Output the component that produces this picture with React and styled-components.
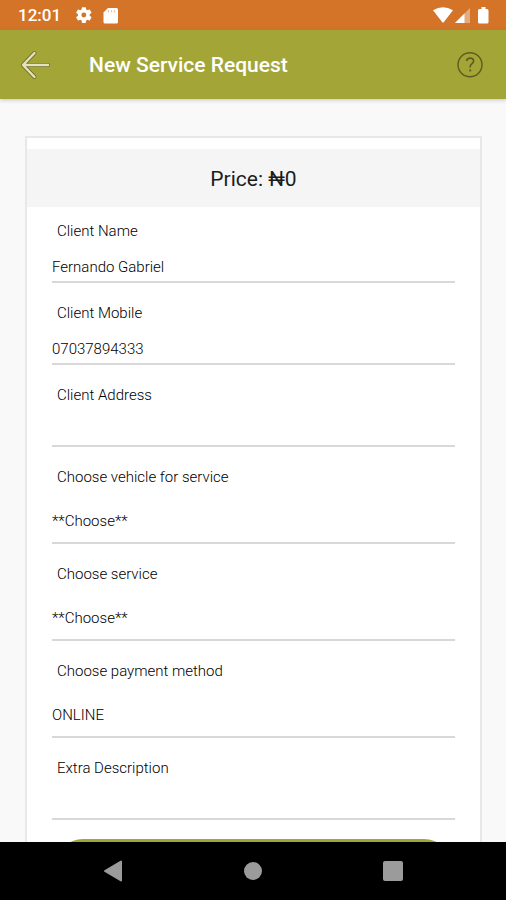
import { useState } from "react";
import styled, { createGlobalStyle } from "styled-components";

const textFields = [
  { id: "clientName", label: "Client Name" },
  { id: "clientMobile", label: "Client Mobile", type: "tel" },
  { id: "clientAddress", label: "Client Address" },
];

const selectFields = [
  { id: "vehicle", label: "Choose vehicle for service", options: ["**Choose**"] },
  { id: "service", label: "Choose service", options: ["**Choose**"] },
  { id: "payment", label: "Choose payment method", options: ["ONLINE", "CASH"] },
];

const StatusIcons = () => (
  <svg width="43" height="18" viewBox="0 0 43 18" fill="#fff" aria-hidden="true">
    <path
      transform="translate(-1 -.8) scale(.82)"
      d="M19.14 12.94c.04-.3.06-.61.06-.94s-.02-.64-.07-.94l2.03-1.58a.49.49 0 0 0 .12-.61l-1.92-3.32a.49.49 0 0 0-.59-.22l-2.39.96a7 7 0 0 0-1.62-.94l-.36-2.54A.48.48 0 0 0 13.92 2.4h-3.84a.48.48 0 0 0-.47.41l-.36 2.54a7.3 7.3 0 0 0-1.62.94l-2.39-.96a.48.48 0 0 0-.59.22L2.74 8.87a.48.48 0 0 0 .12.61l2.03 1.58a7 7 0 0 0 0 1.88l-2.03 1.58a.49.49 0 0 0-.12.61l1.92 3.32c.12.22.37.29.59.22l2.39-.96c.5.38 1.03.7 1.62.94l.36 2.54c.05.24.24.41.48.41h3.84c.24 0 .44-.17.47-.41l.36-2.54a7 7 0 0 0 1.62-.94l2.39.96c.22.08.47 0 .59-.22l1.92-3.32a.48.48 0 0 0-.12-.61zM12 15a3 3 0 1 1 0-6 3 3 0 0 1 0 6z"
    />
    <path d="M33 2h8.500q1.500 0 1.500 1.500v12.500q0 1.500-1.500 1.500h-11.500q-1.500 0-1.500-1.500V6.500z" />
    <path d="M33.500 4v2.500M36.500 4v2.500M39.500 4v2.500" stroke="#d37428" strokeWidth="1.200" opacity=".4" />
  </svg>
);

const SignalIcons = () => (
  <svg width="57" height="18" viewBox="0 0 57 18" fill="#fff" aria-hidden="true">
    <path d="M0 4.200Q10-1.500 20 4.200L10.500 16.500h-1z" />
    <path d="M37 2v15H22z" opacity=".4" />
    <path d="M31.500 7.500V17H22z" />
    <path d="M48.500 1h4v2h1.500q1.500 0 1.500 1.500v11.500q0 1.500-1.500 1.500h-7.500q-1.500 0-1.500-1.500V4.500q0-1.500 1.500-1.500h2z" />
  </svg>
);

const BackArrow = () => (
  <svg width="32" height="30" viewBox="0 0 32 30" fill="none" strokeLinecap="round" strokeLinejoin="round" aria-hidden="true">
    <path d="M14.500 3 3 15l11.500 12M3.500 15H28" stroke="#65652a" strokeWidth="4" opacity=".8" />
    <path d="M14.500 3 3 15l11.500 12M3.500 15H28" stroke="#e6e2bd" strokeWidth="2.400" />
  </svg>
);

const HelpIcon = () => (
  <svg width="26" height="26" viewBox="0 0 26 26" fill="none" stroke="#5f5a1e" aria-hidden="true">
    <circle cx="13" cy="12.800" r="12" strokeWidth="1.400" />
    <path d="M9.500 9c.3-2 1.800-2.900 3.600-2.900 2 0 3.500 1.200 3.500 3 0 2.700-3.400 3-3.400 5.400v1" strokeWidth="1.600" />
    <path d="M13.200 17.500v1.900" strokeWidth="1.900" />
  </svg>
);

export default function App() {
  const [values, setValues] = useState({
    clientName: "Fernando Gabriel",
    clientMobile: "07037894333",
    clientAddress: "",
    vehicle: "**Choose**",
    service: "**Choose**",
    payment: "ONLINE",
    description: "",
  });

  const handleChange = (e) =>
    setValues({ ...values, [e.target.name]: e.target.value });

  return (
    <>
      <GlobalStyle />
      <Screen>
        <StatusBar>
          <Clock>12:01</Clock>
          <StatusIcons />
          <Spacer />
          <SignalIcons />
        </StatusBar>
        <Header>
          <IconButton type="button" aria-label="Back">
            <BackArrow />
          </IconButton>
          <Title>New Service Request</Title>
          <IconButton type="button" aria-label="Help">
            <HelpIcon />
          </IconButton>
        </Header>
        <Content>
          <Card onSubmit={(e) => e.preventDefault()}>
            <Price>Price: ₦0</Price>
            <Fields>
              {textFields.map(({ id, label, type = "text" }) => (
                <Field key={id}>
                  <Label htmlFor={id}>{label}</Label>
                  <Input
                    id={id}
                    name={id}
                    type={type}
                    value={values[id]}
                    onChange={handleChange}
                  />
                </Field>
              ))}
              {selectFields.map(({ id, label, options }) => (
                <Field key={id}>
                  <Label htmlFor={id}>{label}</Label>
                  <Select id={id} name={id} value={values[id]} onChange={handleChange}>
                    {options.map((option) => (
                      <option key={option}>{option}</option>
                    ))}
                  </Select>
                </Field>
              ))}
              <Field>
                <Label htmlFor="description">Extra Description</Label>
                <Input
                  id="description"
                  name="description"
                  value={values.description}
                  onChange={handleChange}
                />
              </Field>
            </Fields>
            <SubmitButton type="submit" aria-label="Submit" />
          </Card>
        </Content>
        <NavBar>
          <NavButton type="button" aria-label="System back">
            <svg width="20" height="22" viewBox="0 0 20 22" fill="#9b9b9b">
              <path d="M18 1.500v19L2 11z" stroke="#9b9b9b" strokeWidth="2" strokeLinejoin="round" />
            </svg>
          </NavButton>
          <NavButton type="button" aria-label="Home">
            <svg width="20" height="20" viewBox="0 0 20 20" fill="#9b9b9b">
              <circle cx="10" cy="10" r="9" />
            </svg>
          </NavButton>
          <NavButton type="button" aria-label="Recent apps">
            <svg width="20" height="20" viewBox="0 0 20 20" fill="#9b9b9b">
              <rect width="20" height="20" rx="2" />
            </svg>
          </NavButton>
        </NavBar>
      </Screen>
    </>
  );
}

const GlobalStyle = createGlobalStyle`
  * {
    box-sizing: border-box;
  }
  body {
    margin: 0;
    background-color: #f9f9f9;
    font-family: Roboto, "Liberation Sans", sans-serif;
  }
`;

const Screen = styled.div`
  height: 100vh;
  display: flex;
  flex-direction: column;
`;

const StatusBar = styled.div`
  flex: none;
  display: flex;
  align-items: center;
  height: 30px;
  padding: 0 16px 0 18px;
  background-color: #d37428;
`;

const Clock = styled.span`
  margin-right: 14px;
  color: #fff;
  font-size: 17px;
  font-weight: 500;
  line-height: 30px;
`;

const Spacer = styled.div`
  flex: 1;
`;

const Header = styled.header`
  flex: none;
  display: flex;
  align-items: center;
  height: 69px;
  padding: 0 23px 0 20px;
  background-color: #a3a636;
  box-shadow: 0 1px 4px #6a6a9066;
  z-index: 1;
`;

const IconButton = styled.button`
  display: flex;
  padding: 0;
  border: none;
  background: none;
  cursor: pointer;
`;

const Title = styled.h1`
  flex: 1;
  margin: 0 0 0 37px;
  color: #fff;
  font-size: 21px;
  font-weight: 500;
  line-height: 28px;
`;

const Content = styled.main`
  flex: 1;
  min-height: 0;
  padding: 37px 24px 0 25px;
  overflow-y: auto;
  scrollbar-width: none;
`;

const Card = styled.form`
  display: flex;
  flex-direction: column;
  padding: 11px 0 24px;
  border: 2px solid #e8e8e8;
  background-color: #fff;
`;

const Price = styled.div`
  padding: 15px 0 13px;
  background-color: #f5f5f5;
  color: #1c1c1c;
  font-size: 21px;
  line-height: 30px;
  text-align: center;
`;

const Fields = styled.div`
  display: flex;
  flex-direction: column;
  gap: 20px;
  padding: 14px 25px 19px;
`;

const Field = styled.div`
  display: flex;
  flex-direction: column;
  gap: 12px;
`;

const Label = styled.label`
  padding-left: 5px;
  color: #000;
  font-size: 15px;
  font-weight: 300;
  line-height: 20px;
`;

const Input = styled.input`
  width: 100%;
  height: 30px;
  padding: 0;
  border: none;
  border-bottom: 2px solid #d8d8d8;
  border-radius: 0;
  outline: none;
  background: none;
  color: #000;
  font-family: inherit;
  font-size: 15px;
  font-weight: 300;
`;

const Select = styled(Input).attrs({ as: "select" })`
  height: 45px;
  appearance: none;
`;

const SubmitButton = styled.button`
  height: 54px;
  margin: 0 29px;
  border: none;
  border-radius: 27px;
  background-color: #a3a636;
  cursor: pointer;
`;

const NavBar = styled.nav`
  flex: none;
  display: flex;
  justify-content: center;
  gap: 100px;
  height: 58px;
  background-color: #000;
`;

const NavButton = styled.button`
  display: flex;
  align-items: center;
  justify-content: center;
  width: 40px;
  padding: 0;
  border: none;
  background: none;
  cursor: pointer;
`;
